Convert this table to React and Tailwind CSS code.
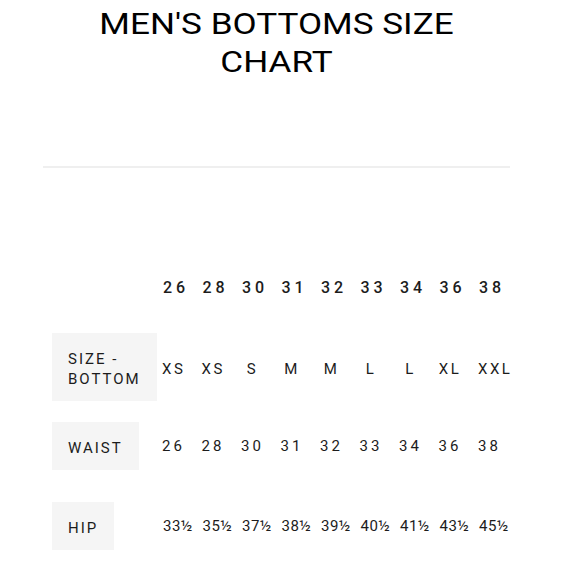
import React from "react";

const sizes = ["26", "28", "30", "31", "32", "33", "34", "36", "38"];
const letters = ["XS", "XS", "S", "M", "M", "L", "L", "XL", "XXL"];
const hips = ["33½", "35½", "37½", "38½", "39½", "40½", "41½", "43½", "45½"];

function Label({ children }) {
  return (
    <div className="w-[110px] shrink-0">
      <div className="inline-block bg-[#f5f5f5] pl-4 pr-4 pt-4 pb-3 text-[15px] leading-[20px] tracking-[2px] text-[#1c1c1c]">
        {children}
      </div>
    </div>
  );
}

function Cells({ items, centered, tracking }) {
  return (
    <div className="grid grid-cols-[repeat(9,39.5px)]">
      {items.map((t, i) => (
        <div key={i} className="w-[39.5px]">
          {centered ? (
            <div className={`w-[23px] text-center whitespace-nowrap ${tracking}`}>{t}</div>
          ) : (
            <div className={`whitespace-nowrap pl-[1px] ${tracking}`}>{t}</div>
          )}
        </div>
      ))}
    </div>
  );
}

export default function App() {
  return (
    <div className="w-[580px] h-[580px] bg-white overflow-hidden font-['Roboto','Liberation_Sans',sans-serif]">
      <div className="ml-[43px] w-[467px]">
        <h1 className="pt-[5px] text-center text-[30px] leading-[37.5px] scale-x-[1.17] origin-center font-normal text-black">
          MEN'S BOTTOMS SIZE
          <br />
          CHART
        </h1>
        <div className="mt-[86px] h-[2px] bg-[#efefef]" />
        <div className="pl-[9px] text-[#1c1c1c]">
          <div className="mt-[110px] flex items-center text-[16px] leading-[20px] font-medium">
            <div className="w-[110px] shrink-0" />
            <Cells items={sizes} centered={false} tracking="tracking-[4px]" />
          </div>
          <div className="mt-[35px] flex items-center text-[15px] leading-[20px]">
            <Label>
              SIZE -<br />BOTTOM
            </Label>
            <div className="pt-[4px]">
              <Cells items={letters} centered={true} tracking="tracking-[2.5px]" />
            </div>
          </div>
          <div className="mt-[21px] flex items-center text-[15px] leading-[20px]">
            <Label>WAIST</Label>
            <Cells items={sizes} centered={true} tracking="tracking-[3px]" />
          </div>
          <div className="mt-[32px] flex items-center text-[15px] leading-[20px]">
            <Label>HIP</Label>
            <Cells items={hips} centered={false} tracking="tracking-[0.5px]" />
          </div>
        </div>
      </div>
    </div>
  );
}
